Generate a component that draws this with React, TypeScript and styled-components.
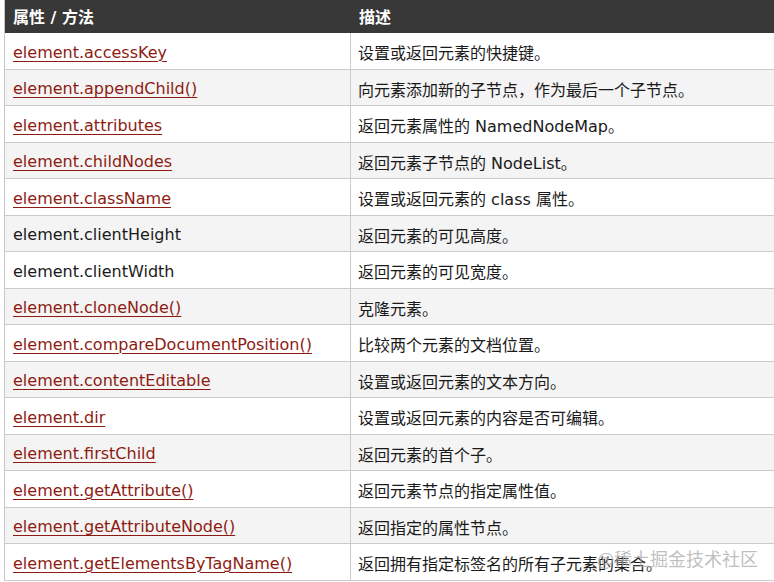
import React from "react";
import styled, { createGlobalStyle } from "styled-components";

const Global = createGlobalStyle`
  html, body { margin: 0; padding: 0; background: #ffffff; overflow: hidden; }
  body { width: 774px; height: 582px; }
`;

const Page = styled.div`
  position: relative;
  width: 774px;
  height: 582px;
  overflow: hidden;
  padding-left: 4px;
  box-sizing: border-box;
`;

const Table = styled.div`
  width: 800px;
  border-left: 1px solid #c8c8c8;
  font-family: "DejaVu Sans", "Noto Sans CJK SC", sans-serif;
  font-size: 16px;
  color: #1a1a1a;
`;

const HeaderRow = styled.div`
  display: grid;
  grid-template-columns: 346px 1fr;
  height: 33px;
  background: #383838;
  color: #ffffff;
  font-weight: bold;
`;

const HeadCell = styled.div`
  display: flex;
  align-items: center;
  padding-left: 8px;
  padding-bottom: 1px;
`;

const Row = styled.div<{ $alt: boolean }>`
  display: grid;
  grid-template-columns: 346px 1fr;
  height: 36.5px;
  box-sizing: border-box;
  border-bottom: 1px solid #cbcbcb;
  background: ${(p) => (p.$alt ? "#f4f4f4" : "#ffffff")};
`;

const Cell = styled.div<{ $divider?: boolean }>`
  display: flex;
  align-items: center;
  padding-left: ${(p) => (p.$divider ? "8px" : "7px")};
  padding-top: 3px;
  white-space: nowrap;
  border-right: ${(p) => (p.$divider ? "1px solid #cbcbcb" : "none")};
`;

const Link = styled.a`
  color: #8e1b12;
  text-decoration: underline;
  text-underline-offset: 3px;
  text-decoration-thickness: 1px;
`;

const Watermark = styled.div`
  position: absolute;
  right: 16px;
  bottom: 11px;
  font-family: "Noto Sans CJK SC", sans-serif;
  font-size: 18px;
  color: rgba(170, 170, 170, 0.75);
  pointer-events: none;
`;

type Item = { name: string; link: boolean; desc: string };

const items: Item[] = [
  { name: "element.accessKey", link: true, desc: "设置或返回元素的快捷键。" },
  { name: "element.appendChild()", link: true, desc: "向元素添加新的子节点，作为最后一个子节点。" },
  { name: "element.attributes", link: true, desc: "返回元素属性的 NamedNodeMap。" },
  { name: "element.childNodes", link: true, desc: "返回元素子节点的 NodeList。" },
  { name: "element.className", link: true, desc: "设置或返回元素的 class 属性。" },
  { name: "element.clientHeight", link: false, desc: "返回元素的可见高度。" },
  { name: "element.clientWidth", link: false, desc: "返回元素的可见宽度。" },
  { name: "element.cloneNode()", link: true, desc: "克隆元素。" },
  { name: "element.compareDocumentPosition()", link: true, desc: "比较两个元素的文档位置。" },
  { name: "element.contentEditable", link: true, desc: "设置或返回元素的文本方向。" },
  { name: "element.dir", link: true, desc: "设置或返回元素的内容是否可编辑。" },
  { name: "element.firstChild", link: true, desc: "返回元素的首个子。" },
  { name: "element.getAttribute()", link: true, desc: "返回元素节点的指定属性值。" },
  { name: "element.getAttributeNode()", link: true, desc: "返回指定的属性节点。" },
  { name: "element.getElementsByTagName()", link: true, desc: "返回拥有指定标签名的所有子元素的集合。" },
];

export default function App() {
  return (
    <Page>
      <Global />
      <Table>
        <HeaderRow>
          <HeadCell>属性 / 方法</HeadCell>
          <HeadCell>描述</HeadCell>
        </HeaderRow>
        {items.map((it, i) => (
          <Row key={it.name} $alt={i % 2 === 1}>
            <Cell $divider>
              {it.link ? <Link href="#">{it.name}</Link> : it.name}
            </Cell>
            <Cell>{it.desc}</Cell>
          </Row>
        ))}
      </Table>
      <Watermark>@稀土掘金技术社区</Watermark>
    </Page>
  );
}
